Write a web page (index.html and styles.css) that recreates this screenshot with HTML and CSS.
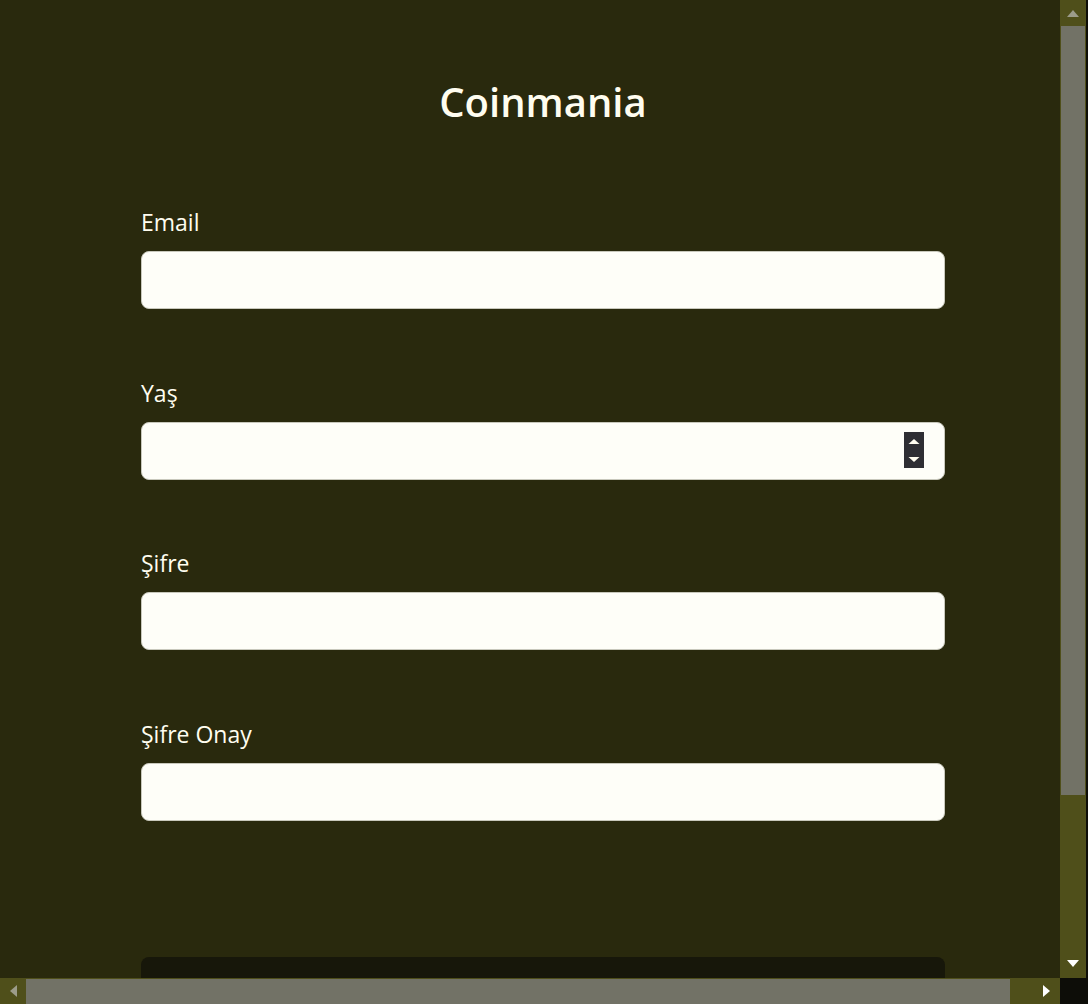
FILE: index.html
```html
<!DOCTYPE html>
<html lang="tr">
<head>
<meta charset="utf-8">
<title>Coinmania</title>
<link rel="stylesheet" href="styles.css">
</head>
<body>
<div class="window">
  <main class="viewport">
    <div class="page">
      <h1 class="title">Coinmania</h1>
      <form class="form">
        <div class="field">
          <label class="label" for="email">Email</label>
          <input class="input" id="email" type="email">
        </div>
        <div class="field">
          <label class="label" for="age">Yaş</label>
          <div class="number-wrap">
            <input class="input" id="age" type="number">
            <span class="spin">
              <svg width="20" height="36" viewBox="0 0 20 36"><path d="M10 7 L15.5 12 L4.5 12 Z" fill="#fffdf0"/><path d="M4.5 25 L15.5 25 L10 30 Z" fill="#fffdf0"/></svg>
            </span>
          </div>
        </div>
        <div class="field">
          <label class="label" for="pw">Şifre</label>
          <input class="input" id="pw" type="password">
        </div>
        <div class="field">
          <label class="label" for="pw2">Şifre Onay</label>
          <input class="input" id="pw2" type="password">
        </div>
        <button class="submit" type="button"></button>
      </form>
    </div>
  </main>
  <div class="vbar">
    <div class="arrow-btn"><svg width="12" height="7" viewBox="0 0 12 7"><path d="M6 0 L12 7 L0 7 Z" fill="#9c9c8a"/></svg></div>
    <div class="vthumb"></div>
    <div class="vtrack"></div>
    <div class="arrow-btn"><svg width="12" height="7" viewBox="0 0 12 7"><path d="M0 0 L12 0 L6 7 Z" fill="#fff"/></svg></div>
  </div>
  <div class="hbar">
    <div class="arrow-btn-h"><svg width="7" height="12" viewBox="0 0 7 12"><path d="M7 0 L7 12 L0 6 Z" fill="#9c9c8a"/></svg></div>
    <div class="hthumb"></div>
    <div class="htrack"><svg width="7" height="12" viewBox="0 0 7 12"><path d="M0 0 L7 6 L0 12 Z" fill="#fff"/></svg></div>
  </div>
  <div class="corner"></div>
</div>
</body>
</html>
```

FILE: styles.css
```css
* { box-sizing: border-box; }
html, body {
  margin: 0;
  padding: 0;
  width: 1088px;
  height: 1004px;
  overflow: hidden;
  background: #29290d;
}
.window {
  display: grid;
  grid-template-columns: 1060px 28px;
  grid-template-rows: 978px 26px;
  width: 1088px;
  height: 1004px;
}
.viewport {
  overflow: hidden;
  background: #29290d;
}
.page {
  width: 1086px;
  height: 1178px;
  padding-top: 78px;
  font-family: "Open Sans", "Noto Sans", sans-serif;
  color: #fffdf0;
}
.title {
  margin: 0;
  text-align: center;
  font-size: 40px;
  line-height: 48px;
  font-weight: 600;
}
.form {
  width: 804px;
  margin: 79px auto 0;
  display: flex;
  flex-direction: column;
}
.field {
  display: flex;
  flex-direction: column;
  margin-bottom: 66.5px;
}
.label {
  font-size: 23px;
  line-height: 30px;
  padding-top: 2px;
  margin-bottom: 14px;
}
.input {
  display: block;
  width: 100%;
  height: 58px;
  border: 1px solid #c8c8bc;
  border-radius: 8px;
  background: #fefef8;
  font-family: inherit;
  font-size: 18px;
  padding: 0 16px;
  outline: none;
}
.input::-webkit-inner-spin-button,
.input::-webkit-outer-spin-button {
  -webkit-appearance: none;
  margin: 0;
}
.number-wrap {
  position: relative;
}
.spin {
  position: absolute;
  right: 21px;
  top: 10px;
  width: 20px;
  height: 36px;
  background: #2e2e33;
  display: flex;
}
.submit {
  margin-top: 70px;
  height: 60px;
  border: none;
  border-radius: 8px;
  background: #17170a;
}
.vbar {
  display: flex;
  flex-direction: column;
  background: #4f4f1a;
  border-right: 2px solid #0e0e08;
}
.arrow-btn {
  height: 26px;
  display: flex;
  align-items: center;
  justify-content: center;
  flex: none;
}
.vthumb {
  height: 769px;
  margin: 0 1px 0 1px;
  background: #727266;
  flex: none;
}
.vtrack { flex: 1; }
.vbar .arrow-btn:last-child { height: 26px; align-items: flex-start; padding-top: 8px; }
.hbar {
  display: flex;
  background: #4f4f1a;
}
.arrow-btn-h {
  width: 26px;
  display: flex;
  align-items: center;
  justify-content: center;
  flex: none;
}
.hthumb {
  width: 984px;
  margin-top: 1px;
  background: #727266;
  flex: none;
}
.htrack {
  flex: 1;
  display: flex;
  align-items: center;
  justify-content: flex-end;
  padding-right: 10px;
}
.corner {
  background: #0d0d08;
}
```
